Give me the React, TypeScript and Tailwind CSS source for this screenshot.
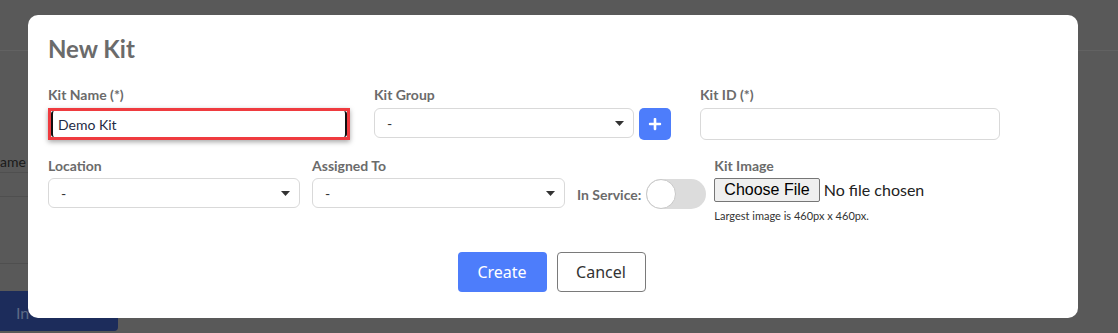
import { FaPlus } from "react-icons/fa";

const Caret = () => (
    <svg width="9" height="5" viewBox="0 0 9 5" className="shrink-0">
        <path d="M0 0h9L4.5 5z" fill="#333" />
    </svg>
);

const Select = ({ width }: { width: string }) => (
    <div className={`${width} h-[30px] flex items-center justify-between pl-3 pr-[9px] bg-white border border-[#d9d9d9] rounded-[6px] text-[14px] text-[#333]`}>
        <span>-</span>
        <Caret />
    </div>
);

const Label = ({ children }: { children: React.ReactNode }) => (
    <div className="h-5 leading-5 text-[14px] font-bold text-[#6b6b6b]">{children}</div>
);

const App = () => {
    return (
        <div className="relative w-[1118px] h-[333px] overflow-hidden bg-[#595959]" style={{ fontFamily: "Lato, 'Open Sans', sans-serif" }}>
            {/* page behind the overlay */}
            <div className="absolute left-0 top-[50px] w-[28px] h-px bg-[#626262]"></div>
            <div className="absolute right-0 top-[50px] w-[40px] h-px bg-[#626262]"></div>
            <div className="absolute left-0 top-[154px] text-[14px] leading-4 text-[#1a1a1a]">ame</div>
            <div className="absolute left-0 top-[172px] w-[28px] h-px bg-[#4f4f4f]"></div>
            <div className="absolute left-0 top-[196px] w-[28px] h-px bg-[#4f4f4f]"></div>
            <div className="absolute left-0 top-[263px] w-[28px] h-px bg-[#4f4f4f]"></div>
            <div className="absolute left-0 top-[291px] w-[118px] h-[40px] bg-[#1c2c5b] rounded-br-[4px] pl-4 pt-[10px] text-[16px] text-[#5d6a86]">In</div>

            <div className="relative ml-[28px] mt-[15px] w-[1050px] h-[303px] bg-white rounded-[10px] px-5 pt-[18px]">
                <h2 className="h-8 leading-8 text-[24px] font-bold text-[#6b6b6b]">New Kit</h2>

                <div className="flex mt-5">
                    <div className="w-[302px] flex flex-col">
                        <Label>Kit Name (*)</Label>
                        <div className="mt-[3px] h-[32px] border-[3px] border-[#ef3b3f] shadow-[0_2px_5px_rgba(0,0,0,0.35)]">
                            <div className="h-full bg-white border-x-2 border-x-[#111] rounded-[3px] pl-[5px] flex items-center text-[14px] text-[#1f2a44]">
                                Demo Kit
                            </div>
                        </div>
                    </div>
                    <div className="ml-[24px] w-[297px] flex flex-col">
                        <Label>Kit Group</Label>
                        <div className="mt-[3px] flex items-start gap-[5px]">
                            <Select width="w-[260px]" />
                            <div className="w-[32px] h-[32px] rounded-[5px] bg-[#4d7dfb] flex items-center justify-center text-white">
                                <FaPlus className="text-[14px]" />
                            </div>
                        </div>
                    </div>
                    <div className="ml-[29px] w-[300px] flex flex-col">
                        <Label>Kit ID (*)</Label>
                        <div className="mt-[3px] h-[32px] border border-[#d9d9d9] rounded-[6px] bg-white"></div>
                    </div>
                </div>

                <div className="flex mt-[16px] items-start">
                    <div className="w-[252px] flex flex-col">
                        <Label>Location</Label>
                        <div className="mt-[2px]"><Select width="w-[252px]" /></div>
                    </div>
                    <div className="ml-[12px] w-[253px] flex flex-col">
                        <Label>Assigned To</Label>
                        <div className="mt-[2px]"><Select width="w-[253px]" /></div>
                    </div>
                    <div className="ml-[12px] mt-[23px] flex items-center gap-[5px]">
                        <span className="text-[14px] font-bold text-[#6b6b6b]">In Service:</span>
                        <div className="w-[60px] h-[30px] rounded-full bg-[#dcdcdc] flex items-center">
                            <div className="w-[30px] h-[30px] rounded-full bg-white border border-[#c8c8c8]"></div>
                        </div>
                    </div>
                    <div className="ml-[8px] flex flex-col">
                        <Label>Kit Image</Label>
                        <div className="mt-[2px] flex items-center gap-[4px]">
                            <div className="h-[24px] px-[9px] flex items-center bg-[#efefef] border border-[#767676] rounded-[2px] text-[16px] text-black" style={{ fontFamily: "'Liberation Sans', Arial, sans-serif" }}>
                                Choose File
                            </div>
                            <span className="text-[16px] text-[#222]">No file chosen</span>
                        </div>
                        <div className="mt-[6px] text-[11px] leading-4 text-[#333]">Largest image is 460px x 460px.</div>
                    </div>
                </div>

                <div className="flex justify-center gap-[10px] mt-[28px] pr-[3px]">
                    <button className="w-[89px] h-[40px] rounded-[4px] bg-[#4d7dfb] text-white text-[16px]" style={{ fontFamily: "'Noto Sans', sans-serif" }}>
                        Create
                    </button>
                    <button className="w-[89px] h-[40px] rounded-[4px] bg-white border border-[#7a7a7a] text-[#333] text-[16px]" style={{ fontFamily: "'Noto Sans', sans-serif" }}>
                        Cancel
                    </button>
                </div>
            </div>
        </div>
    );
};

export default App;
